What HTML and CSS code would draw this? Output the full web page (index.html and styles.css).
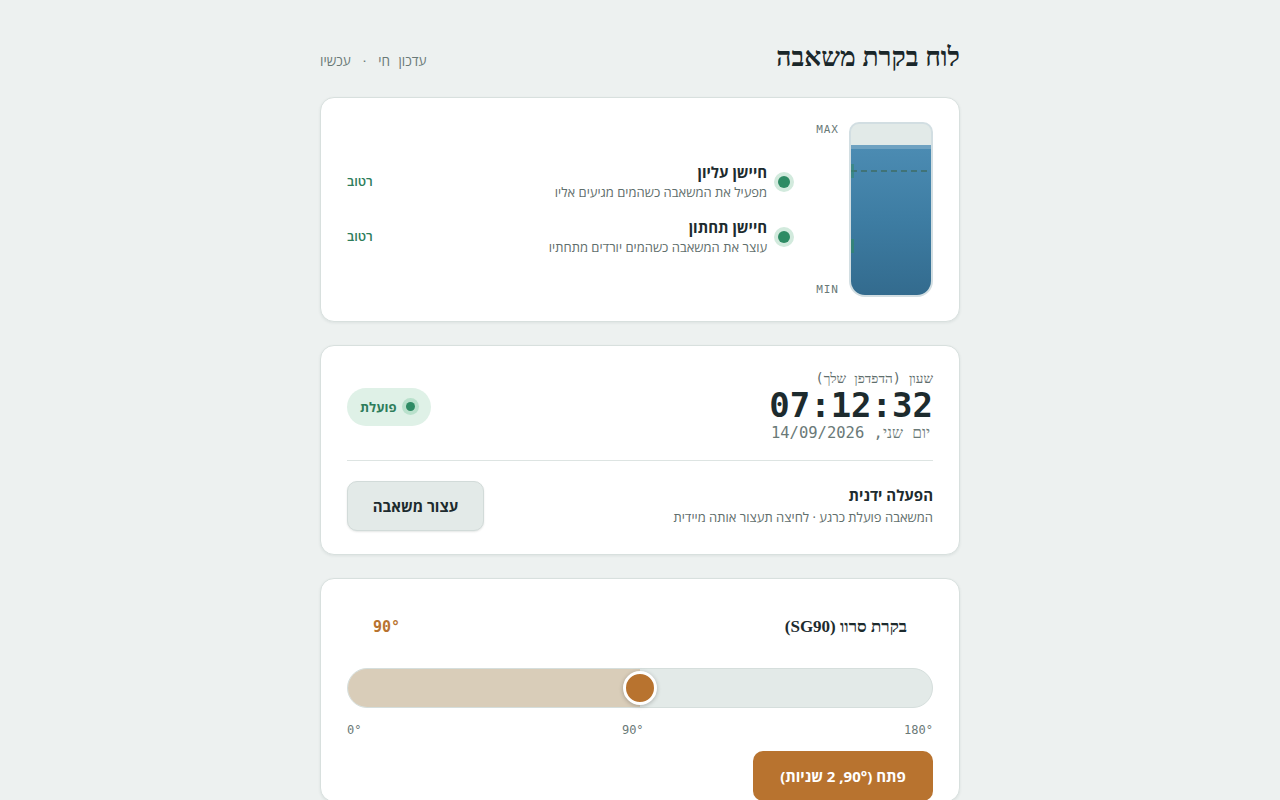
FILE: index.html
```html
<!DOCTYPE html>
<html lang="he" dir="rtl">
<head>
<meta charset="utf-8">
<title>לוח בקרת משאבה</title>
<link rel="stylesheet" href="styles.css">
</head>
<body>
<main class="page">
  <header class="top">
    <h1 class="title">לוח בקרת משאבה</h1>
    <div class="live"><span>עדכון חי</span><span class="sep">·</span><span>עכשיו</span></div>
  </header>

  <section class="card tank-card">
    <div class="tank-wrap">
      <div class="tank">
        <div class="water" style="height: 88%"></div>
        <div class="marker marker-top"></div>
        <div class="marker marker-bottom"></div>
      </div>
      <div class="scale">
        <span>MAX</span>
        <span>MIN</span>
      </div>
    </div>
    <div class="sensors">
      <div class="sensor">
        <span class="dot"></span>
        <div class="sensor-text">
          <div class="sensor-name">חיישן עליון</div>
          <div class="sensor-desc">מפעיל את המשאבה כשהמים מגיעים אליו</div>
        </div>
        <span class="state">רטוב</span>
      </div>
      <div class="sensor">
        <span class="dot"></span>
        <div class="sensor-text">
          <div class="sensor-name">חיישן תחתון</div>
          <div class="sensor-desc">עוצר את המשאבה כשהמים יורדים מתחתיו</div>
        </div>
        <span class="state">רטוב</span>
      </div>
    </div>
  </section>

  <section class="card clock-card">
    <div class="clock-row">
      <div class="clock">
        <div class="clock-label">שעון (הדפדפן שלך)</div>
        <div class="clock-time">07:12:32</div>
        <div class="clock-date">יום שני, 14/09/2026</div>
      </div>
      <div class="badge"><span class="badge-dot"></span>פועלת</div>
    </div>
    <div class="manual">
      <div class="manual-text">
        <div class="manual-title">הפעלה ידנית</div>
        <div class="manual-desc">המשאבה פועלת כרגע · לחיצה תעצור אותה מיידית</div>
      </div>
      <button class="btn-stop">עצור משאבה</button>
    </div>
  </section>

  <section class="card servo-card">
    <div class="servo-head">
      <h2 class="servo-title">בקרת סרוו (SG90)</h2>
      <div class="servo-value">90°</div>
    </div>
    <div class="slider">
      <div class="slider-fill" style="width: 50%"></div>
      <div class="slider-thumb" style="left: 50%"></div>
    </div>
    <div class="ticks">
      <span>0°</span>
      <span>90°</span>
      <span>180°</span>
    </div>
    <div class="servo-actions">
      <button class="btn-open">פתח (90°, 2 שניות)</button>
    </div>
  </section>
</main>
</body>
</html>
```

FILE: styles.css
```css
* { box-sizing: border-box; }

html, body {
  margin: 0;
  padding: 0;
}

body {
  background: #edf1f0;
  font-family: "Open Sans", "DejaVu Sans", sans-serif;
  color: #1d2b2e;
}

.page {
  width: 640px;
  margin: 0 auto;
  padding-top: 38px;
  display: flex;
  flex-direction: column;
  gap: 23px;
}

.top {
  display: flex;
  align-items: center;
  justify-content: space-between;
  height: 36px;
}

.title {
  margin: 0;
  font-family: "Liberation Serif", serif;
  font-size: 26.5px;
  font-weight: 800;
  color: #1a272a;
  line-height: 35px;
  padding-top: 2px;
}

.live {
  display: flex;
  align-items: center;
  gap: 12px;
  font-size: 13.5px;
  word-spacing: 5px;
  color: #6a7977;
  padding-top: 10px;
}

.card {
  background: #ffffff;
  border: 1px solid #d8e0de;
  border-radius: 14px;
  box-shadow: 0 1px 3px rgba(30, 50, 45, 0.08);
}

/* Tank card */
.tank-card {
  padding: 24px 26px 24px;
  display: flex;
  align-items: stretch;
  gap: 22px;
}

.tank-wrap {
  display: flex;
  gap: 10px;
}

.tank {
  position: relative;
  width: 84px;
  height: 175px;
  border: 2px solid #d2dee2;
  border-radius: 10px 10px 16px 16px;
  background: #e2eae8;
  overflow: hidden;
  display: flex;
  flex-direction: column;
  justify-content: flex-end;
}

.water {
  width: 100%;
  background: linear-gradient(180deg, #4b8bb2 0%, #3d7ca2 50%, #336b8e 100%);
  border-top: 4px solid #6fa2c1;
}

.marker {
  position: absolute;
  right: 0;
  left: 0;
  height: 2px;
}

.marker-top {
  top: 46px;
  background: repeating-linear-gradient(90deg, #3f6f6a 0 6px, transparent 6px 10px);
  opacity: 0.8;
}

.marker-top::after,
.marker-bottom::after {
  content: "";
  position: absolute;
  left: 0;
  top: -6px;
  width: 3px;
  height: 14px;
  background: #2e8b64;
  opacity: 0.6;
}

.marker-bottom {
  top: 121px;
}

.scale {
  display: flex;
  flex-direction: column;
  justify-content: space-between;
  font-family: "DejaVu Sans Mono", monospace;
  font-size: 11px;
  letter-spacing: 1px;
  color: #6a7977;
  padding: 1px 0 0 0;
  line-height: 14px;
  direction: ltr;
}

.sensors {
  flex: 1;
  display: flex;
  flex-direction: column;
  justify-content: center;
  gap: 14px;
}

.sensor {
  display: flex;
  align-items: center;
  gap: 7px;
}

.dot {
  width: 12px;
  height: 12px;
  border-radius: 50%;
  background: #2e8b64;
  box-shadow: 0 0 0 4px #d2eadd;
  margin: 0 4px;
  flex: none;
}

.sensor-text {
  flex: 1;
}

.sensor-name {
  font-size: 15px;
  font-weight: 700;
  line-height: 20px;
  color: #1d2b2e;
}

.sensor-desc {
  font-size: 13px;
  line-height: 21px;
  color: #5f6e6c;
}

.state {
  font-size: 13px;
  font-weight: 600;
  color: #2e7d5b;
  padding-bottom: 2px;
}

/* Clock card */
.clock-card {
  padding: 24px 26px 23px;
}

.clock-row {
  display: flex;
  align-items: center;
  justify-content: space-between;
  padding-bottom: 17px;
  border-bottom: 1px solid #dde4e2;
}

.clock {
  font-family: "DejaVu Sans Mono", monospace;
  text-align: right;
}

.clock-label {
  font-size: 13.5px;
  line-height: 16px;
  color: #5f6e6c;
}

.clock-time {
  font-size: 34px;
  line-height: 38px;
  font-weight: 700;
  color: #1d2b2e;
  direction: ltr;
}

.clock-date {
  font-size: 15.5px;
  line-height: 19px;
  color: #6a7977;
  padding-right: 3px;
}

.badge {
  display: flex;
  align-items: center;
  gap: 6px;
  height: 38px;
  padding: 0 12px 0 13px;
  border-radius: 19px;
  background: #dff1e7;
  color: #2e7d5b;
  font-size: 13px;
  font-weight: 700;
}

.badge-dot {
  width: 9px;
  height: 9px;
  border-radius: 50%;
  background: #2e8b64;
  box-shadow: 0 0 0 4px #b9e1cc;
  margin: 0 4px;
}

.manual {
  display: flex;
  align-items: center;
  justify-content: space-between;
  margin-top: 20px;
}

.manual-title {
  font-size: 15px;
  font-weight: 700;
  line-height: 22px;
  color: #1d2b2e;
}

.manual-desc {
  font-size: 13px;
  line-height: 22px;
  color: #5f6e6c;
}

.btn-stop {
  font-family: inherit;
  width: 137px;
  height: 50px;
  border: 1px solid #d2dbd9;
  border-radius: 10px;
  background: #e3eae8;
  color: #1d2b2e;
  font-size: 15px;
  font-weight: 700;
  box-shadow: 0 1px 2px rgba(30, 50, 45, 0.12);
}

/* Servo card */
.servo-card {
  padding: 24px 26px 0;
}

.servo-head {
  display: flex;
  align-items: center;
  justify-content: space-between;
  padding: 12px 26px;
}

.servo-title {
  margin: 0;
  font-family: "Liberation Serif", serif;
  font-size: 17px;
  font-weight: 700;
  line-height: 24px;
  color: #1d2b2e;
}

.servo-value {
  font-family: "DejaVu Sans Mono", monospace;
  font-size: 15px;
  font-weight: 700;
  color: #b8732f;
  direction: ltr;
}

.slider {
  position: relative;
  direction: ltr;
  margin-top: 17px;
  height: 40px;
  border-radius: 20px;
  background: #e3eae8;
  border: 1px solid #d5dedc;
}

.slider-fill {
  height: 100%;
  border-radius: 20px 0 0 20px;
  background: #d9cdb9;
}

.slider-thumb {
  position: absolute;
  top: 50%;
  width: 34px;
  height: 34px;
  margin-left: -17px;
  margin-top: -17px;
  border-radius: 50%;
  background: #b8732f;
  border: 3px solid #ffffff;
  box-shadow: 0 1px 4px rgba(0, 0, 0, 0.25);
}

.ticks {
  direction: ltr;
  display: flex;
  justify-content: space-between;
  margin-top: 15px;
  font-family: "DejaVu Sans Mono", monospace;
  font-size: 12px;
  line-height: 14px;
  color: #6a7977;
}

.servo-actions {
  display: flex;
  margin-top: 14px;
}

.btn-open {
  font-family: inherit;
  width: 180px;
  height: 50px;
  border: none;
  border-radius: 10px;
  background: #b8732f;
  color: #ffffff;
  font-size: 15px;
  font-weight: 700;
}
```
